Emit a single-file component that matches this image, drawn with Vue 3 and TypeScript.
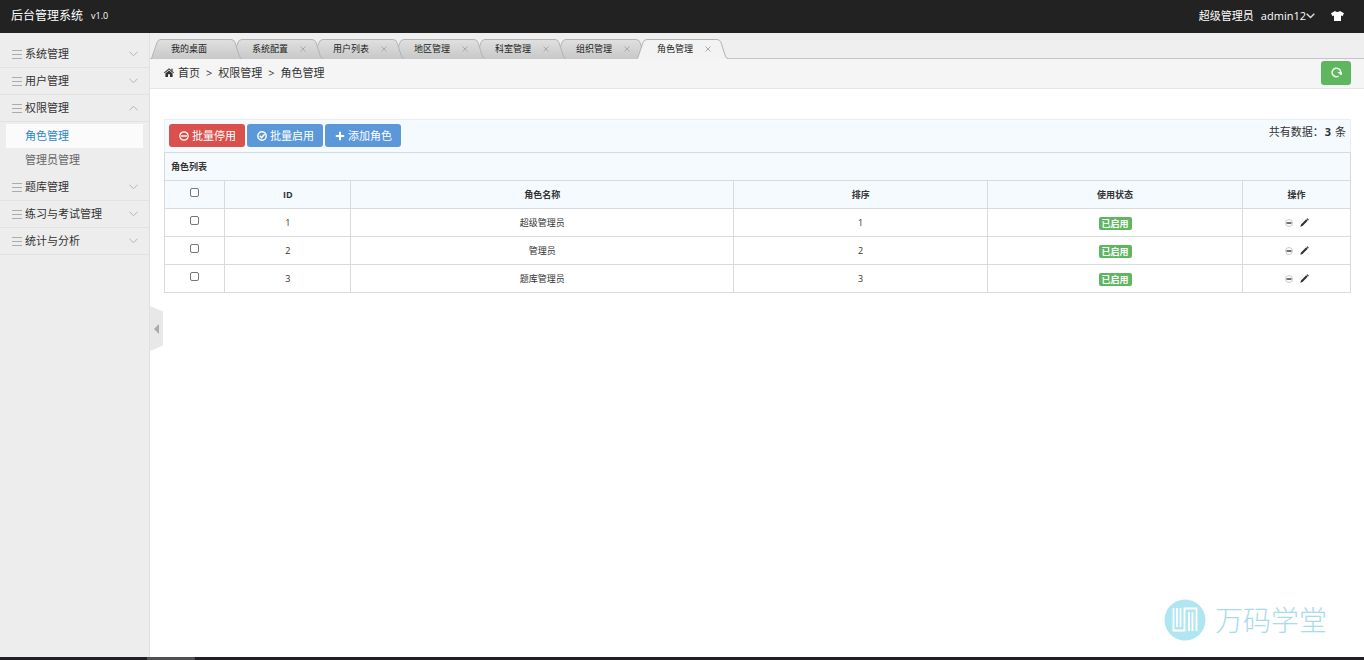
<script setup lang="ts">
import { ref } from 'vue'

interface MenuEntry {
  label: string
  children?: string[]
}

interface Role {
  id: number
  name: string
  sort: number
}

const menu: MenuEntry[] = [
  { label: '系统管理' },
  { label: '用户管理' },
  { label: '权限管理', children: ['角色管理', '管理员管理'] },
  { label: '题库管理' },
  { label: '练习与考试管理' },
  { label: '统计与分析' },
]
const openMenu = ref('权限管理')
const currentPage = ref('角色管理')

const tabs = ['我的桌面', '系统配置', '用户列表', '地区管理', '科室管理', '组织管理', '角色管理']
const activeTab = ref(6)

const roles: Role[] = [
  { id: 1, name: '超级管理员', sort: 1 },
  { id: 2, name: '管理员', sort: 2 },
  { id: 3, name: '题库管理员', sort: 3 },
]
const selected = ref<number[]>([])

function toggleMenu(label: string) {
  openMenu.value = openMenu.value === label ? '' : label
}

function toggleAll(event: Event) {
  selected.value = (event.target as HTMLInputElement).checked ? roles.map((r) => r.id) : []
}
</script>

<template>
  <div class="app">
    <header class="topbar">
      <a href="#" class="brand">后台管理系统</a>
      <span class="version">v1.0</span>
      <div class="account">
        <span>超级管理员</span>
        <button type="button" class="user">
          admin12
          <svg width="9" height="6" viewBox="0 0 9 6"><path d="M0.7 0.7 4.5 4.6 8.3 0.7" fill="none" stroke="#ddd" stroke-width="1.4" /></svg>
        </button>
        <button type="button" class="skin" aria-label="换肤">
          <svg width="13" height="10" viewBox="0 0 13 10"><path d="M4 0Q6.500 2 9 0L13 2.300 11.500 5.200 10 4.500V10H3V4.500L1.500 5.200 0 2.300Z" fill="#fff" /></svg>
        </button>
      </div>
    </header>

    <div class="body">
      <nav class="sidebar">
        <div v-for="m in menu" :key="m.label">
          <button type="button" class="menu-item" :aria-expanded="openMenu === m.label" @click="toggleMenu(m.label)">
            <svg width="10" height="9" viewBox="0 0 10 9"><path d="M0 .5H10M0 4.500H10M0 8.500H10" stroke="#a9adb0" /></svg>
            <span>{{ m.label }}</span>
            <svg class="arrow" :class="{ up: openMenu === m.label }" width="9" height="6" viewBox="0 0 9 6"><path d="M.5.7 4.500 4.800 8.500.7" fill="none" stroke="#b4b4b4" /></svg>
          </button>
          <div v-if="m.children && openMenu === m.label" class="submenu">
            <a v-for="c in m.children" :key="c" href="#" :class="{ current: currentPage === c }" @click.prevent="currentPage = c">{{ c }}</a>
          </div>
        </div>
      </nav>

      <main class="main">
        <button type="button" class="collapse" aria-label="收起菜单">
          <svg width="5" height="10" viewBox="0 0 5 10"><path d="M5 0V10L0 5Z" fill="#aaa" /></svg>
        </button>

        <div class="tabs">
          <div v-for="(t, i) in tabs" :key="t" class="tab" :class="{ active: activeTab === i }">
            <svg class="shape" width="91" height="20" viewBox="0 0 91 20">
              <defs>
                <linearGradient id="tabFill" x1="0" y1="0" x2="0" y2="1">
                  <stop offset="0" stop-color="#e0e0e0" />
                  <stop offset="1" stop-color="#c8c8c8" />
                </linearGradient>
              </defs>
              <path
                d="M.5 20 6 3.500Q7 .5 10 .5H80Q83 .5 84 3.500L88 16Q89 19.500 91 19.500V20Z"
                :fill="activeTab === i ? '#f3f3f3' : 'url(#tabFill)'"
              />
              <path d="M.5 19.500 6 3.500Q7 .5 10 .5H80Q83 .5 84 3.500L88 16Q89 19.500 91 19.500" fill="none" stroke="#b3b3b3" />
            </svg>
            <button type="button" class="tab-label" @click="activeTab = i">{{ t }}</button>
            <button v-if="i > 0" type="button" class="close" aria-label="关闭">
              <svg width="6" height="6" viewBox="0 0 6 6"><path d="M.5.5 5.500 5.500M5.500.5.500 5.500" stroke="#aaa" /></svg>
            </button>
          </div>
        </div>

        <div class="crumbs">
          <svg width="10" height="9" viewBox="0 0 10 9">
            <path d="M0 4.600 5 .2 10 4.600 9.300 5.300 5 1.600.7 5.300ZM5 2.400 8.600 5.500V9H6V6.300H4V9H1.400V5.500ZM7.400.7H8.600V3L7.400 2Z" fill="#333" />
          </svg>
          <a href="#">首页</a>
          <span class="sep">&gt;</span>
          <span>权限管理</span>
          <span class="sep">&gt;</span>
          <span>角色管理</span>
          <button type="button" class="refresh" aria-label="刷新">
            <svg width="11" height="11" viewBox="0 0 11 11">
              <path d="M7.600 9.200A4.300 4.300 0 1 1 9.700 5" fill="none" stroke="#e9f7e9" stroke-width="1.500" />
              <path d="M6.400 5H11V7.900H9.400Z" fill="#e9f7e9" />
            </svg>
          </button>
        </div>

        <section class="content">
          <div class="toolbar">
            <button type="button" class="btn danger">
              <svg width="10" height="10" viewBox="0 0 10 10"><circle cx="5" cy="5" r="4.200" fill="none" stroke="#fff" stroke-width="1.200" /><path d="M2 5H8" stroke="#fff" stroke-width="1.400" /></svg>
              批量停用
            </button>
            <button type="button" class="btn primary">
              <svg width="10" height="10" viewBox="0 0 10 10"><circle cx="5" cy="5" r="4.200" fill="none" stroke="#fff" stroke-width="1.400" /><path d="M2.700 4.800 4.500 6.600 7.600 3.300" fill="none" stroke="#fff" stroke-width="1.500" /></svg>
              批量启用
            </button>
            <button type="button" class="btn primary">
              <svg width="10" height="10" viewBox="0 0 10 10"><path d="M5 .8V9.200M.8 5H9.200" stroke="#fff" stroke-width="2" /></svg>
              添加角色
            </button>
            <span class="total">共有数据：<strong>3</strong> 条</span>
          </div>

          <table class="grid">
            <colgroup>
              <col class="c-check" /><col class="c-id" /><col class="c-name" /><col class="c-sort" /><col class="c-state" /><col class="c-op" />
            </colgroup>
            <thead>
              <tr><th colspan="6" class="caption">角色列表</th></tr>
              <tr>
                <th><input type="checkbox" aria-label="全选" :checked="selected.length === roles.length" @change="toggleAll" /></th>
                <th>ID</th>
                <th>角色名称</th>
                <th>排序</th>
                <th>使用状态</th>
                <th>操作</th>
              </tr>
            </thead>
            <tbody>
              <tr v-for="r in roles" :key="r.id">
                <td><input v-model="selected" type="checkbox" :value="r.id" :aria-label="r.name" /></td>
                <td>{{ r.id }}</td>
                <td>{{ r.name }}</td>
                <td>{{ r.sort }}</td>
                <td><span class="badge">已启用</span></td>
                <td>
                  <div class="ops">
                    <button type="button" aria-label="停用">
                      <svg width="8" height="8" viewBox="0 0 8 8"><circle cx="4" cy="4" r="3.500" fill="none" stroke="#bbb" stroke-width=".8" /><path d="M1.500 4H6.500" stroke="#222" stroke-width="1.300" /></svg>
                    </button>
                    <button type="button" aria-label="编辑">
                      <svg width="9" height="9" viewBox="0 0 9 9"><path d="M.3 8.700 1 6.500 6.200 1.300 7.700 2.800 2.500 8ZM6.600.9 7.400.2 8.800 1.600 8.100 2.400Z" fill="#333" /></svg>
                    </button>
                  </div>
                </td>
              </tr>
            </tbody>
          </table>
        </section>

        <div class="watermark">
          <svg width="42" height="42" viewBox="0 0 42 42">
            <circle cx="21" cy="21" r="20.500" fill="#b0e6f2" />
            <path d="M9.500 9V31.500H20.500V9.500H32.500V32M13 9V28M16.500 9V28M25 13V32M28.500 13V32" fill="none" stroke="#fff" stroke-width="1.800" />
          </svg>
          <span>万码学堂</span>
        </div>
      </main>
    </div>

    <footer class="bottom"><span></span></footer>
  </div>
</template>

<style>
body {
  margin: 0;
}
</style>

<style scoped>
.app {
  display: flex;
  flex-direction: column;
  min-height: 100vh;
  background: #fff;
  color: #333;
  font: 11px/16px "Open Sans", "Noto Sans CJK SC", sans-serif;
}
.app * {
  box-sizing: border-box;
}
button {
  margin: 0;
  padding: 0;
  border: 0;
  background: none;
  color: inherit;
  font: inherit;
  cursor: pointer;
}
a {
  color: inherit;
  text-decoration: none;
}
svg {
  display: block;
  flex: none;
}
.topbar {
  display: flex;
  align-items: center;
  height: 33px;
  padding: 0 20px 2px 11px;
  background: #222;
  color: #fff;
}
.brand {
  font-size: 12px;
}
.version {
  margin-left: 8px;
  font-size: 9px;
}
.account {
  display: flex;
  align-items: center;
  margin-left: auto;
}
.user {
  display: flex;
  align-items: center;
  margin-left: 7px;
}
.skin {
  margin-left: 16px;
}
.body {
  display: flex;
  flex: 1;
}
.sidebar {
  flex: none;
  width: 150px;
  padding-top: 8px;
  background: #ededed;
  border-right: 1px solid #e0e0e0;
}
.menu-item {
  display: flex;
  align-items: center;
  gap: 3px;
  width: 100%;
  height: 27px;
  padding: 0 11px 0 12px;
  border-bottom: 1px solid #e2e2e2;
}
.arrow {
  margin-left: auto;
}
.arrow.up {
  transform: rotate(180deg);
}
.submenu {
  padding: 2px 6px;
}
.submenu a {
  display: block;
  height: 24px;
  padding-left: 19px;
  color: #666;
  line-height: 24px;
}
.submenu a.current {
  background: #fbfbfb;
  color: #2a85c9;
}
.main {
  position: relative;
  flex: 1;
  min-width: 0;
}
.collapse {
  position: absolute;
  top: 273px;
  left: 0;
  display: flex;
  align-items: center;
  justify-content: center;
  width: 13px;
  height: 45px;
  background: #e8e8e8;
  clip-path: polygon(0 0, 100% 12%, 100% 88%, 0 100%);
}
.tabs {
  display: flex;
  height: 26px;
  padding: 6px 0 0 1px;
  background: #efeff0;
  box-shadow: inset 0 -1px #c4c4c6;
}
.tab {
  position: relative;
  display: flex;
  align-items: center;
  justify-content: space-between;
  width: 81px;
  height: 20px;
  padding: 0 7px 0 20px;
  color: #222;
  font-size: 9px;
}
.tab:nth-child(1) { z-index: 7; }
.tab:nth-child(2) { z-index: 6; }
.tab:nth-child(3) { z-index: 5; }
.tab:nth-child(4) { z-index: 4; }
.tab:nth-child(5) { z-index: 3; }
.tab:nth-child(6) { z-index: 2; }
.tab.active {
  z-index: 8;
}
.shape {
  position: absolute;
  top: 0;
  left: 0;
}
.tab-label,
.close {
  position: relative;
}
.crumbs {
  display: flex;
  align-items: center;
  height: 30px;
  padding: 0 13px 2px 14px;
  background: #f5f5f5;
  border-bottom: 1px solid #e5e5e5;
}
.crumbs a {
  margin-left: 4px;
}
.sep {
  margin: 0 6px;
}
.refresh {
  display: flex;
  align-items: center;
  justify-content: center;
  width: 30px;
  height: 24px;
  margin-left: auto;
  border-radius: 3px;
  background: #5eb75e;
}
.content {
  padding: 30px 13px 0 14px;
}
.toolbar {
  display: flex;
  align-items: center;
  gap: 2px;
  height: 33px;
  padding: 0 4px 1px;
  background: #f5fafe;
  border: 1px solid #e8eef2;
  border-bottom: 0;
}
.btn {
  display: flex;
  align-items: center;
  gap: 3px;
  height: 23px;
  padding: 0 9px 0 10px;
  border-radius: 3px;
  color: #fff;
}
.danger {
  background: #d9504d;
}
.primary {
  background: #5b98d9;
}
.total {
  align-self: flex-start;
  margin: 4px 0 0 auto;
}
.total strong {
  margin: 0 1px;
}
.grid {
  width: 100%;
  border-collapse: collapse;
  table-layout: fixed;
  font-size: 9px;
  line-height: 15px;
}
.c-check { width: 5.1%; }
.c-id { width: 10.6%; }
.c-name { width: 32.3%; }
.c-sort { width: 21.4%; }
.c-state { width: 21.5%; }
.c-op { width: 9.1%; }
.grid th,
.grid td {
  height: 28px;
  padding: 0 6px;
  border: 1px solid #d8dadd;
  text-align: center;
  vertical-align: middle;
}
.grid th {
  background: #f5fafe;
}
.grid th.caption {
  text-align: left;
}
.grid input {
  display: block;
  appearance: none;
  width: 9px;
  height: 9px;
  margin: 0 auto 4px;
  border: 1px solid #767676;
  border-radius: 2px;
  background: #fff;
}
.grid input:checked {
  background: #2a85c9;
}
.badge {
  display: inline-block;
  height: 13px;
  padding: 0 3px;
  border-radius: 2px;
  background: #5eb75e;
  color: #fff;
  font-weight: 700;
  line-height: 13px;
  vertical-align: middle;
}
.ops {
  display: flex;
  align-items: center;
  justify-content: center;
  gap: 7px;
}
.watermark {
  position: absolute;
  right: 37px;
  bottom: 16px;
  display: flex;
  align-items: center;
  gap: 9px;
  color: #a9dbea;
  font-size: 28px;
  font-weight: 300;
  line-height: 42px;
}
.bottom {
  display: flex;
  height: 3px;
  padding-left: 147px;
  background: #211f24;
}
.bottom span {
  width: 48px;
  background: #505052;
}
</style>
